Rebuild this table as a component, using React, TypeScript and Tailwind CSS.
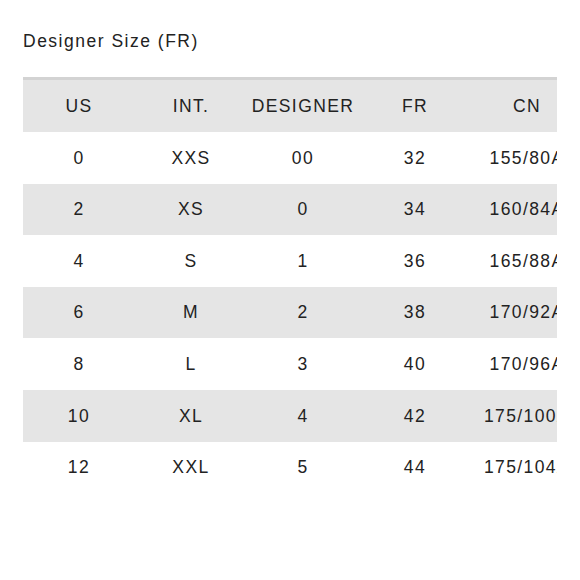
import React from 'react';

const headers = ['US', 'INT.', 'DESIGNER', 'FR', 'CN'];

const rows = [
  ['0', 'XXS', '00', '32', '155/80A'],
  ['2', 'XS', '0', '34', '160/84A'],
  ['4', 'S', '1', '36', '165/88A'],
  ['6', 'M', '2', '38', '170/92A'],
  ['8', 'L', '3', '40', '170/96A'],
  ['10', 'XL', '4', '42', '175/100A'],
  ['12', 'XXL', '5', '44', '175/104A'],
];

export default function App() {
  return (
    <div
      className="min-h-[580px] w-[580px] bg-white pl-[23px] pt-[31px] text-[#222]"
      style={{ fontFamily: '"Liberation Sans", Arial, sans-serif' }}
    >
      <h1 className="text-[17.5px] leading-[21px] tracking-[1.5px]">Designer Size (FR)</h1>

      <div className="mt-[25px] w-[534px] overflow-hidden border-t-[3px] border-[#d3d3d3]">
        <div className="w-[560px]">
          <div className="grid h-[52px] grid-cols-5 items-center bg-[#e5e5e5] text-[17.5px] tracking-[1.4px]">
            {headers.map((h) => (
              <div key={h} className="text-center whitespace-nowrap">
                {h}
              </div>
            ))}
          </div>
          {rows.map((r, i) => (
            <div
              key={r[0]}
              className={`grid h-[51.6px] grid-cols-5 items-center text-[17.5px] tracking-[1.4px] ${
                i % 2 === 1 ? 'bg-[#e5e5e5]' : 'bg-white'
              }`}
            >
              {r.map((c, j) => (
                <div key={j} className="text-center whitespace-nowrap">
                  {c}
                </div>
              ))}
            </div>
          ))}
        </div>
      </div>
    </div>
  );
}
